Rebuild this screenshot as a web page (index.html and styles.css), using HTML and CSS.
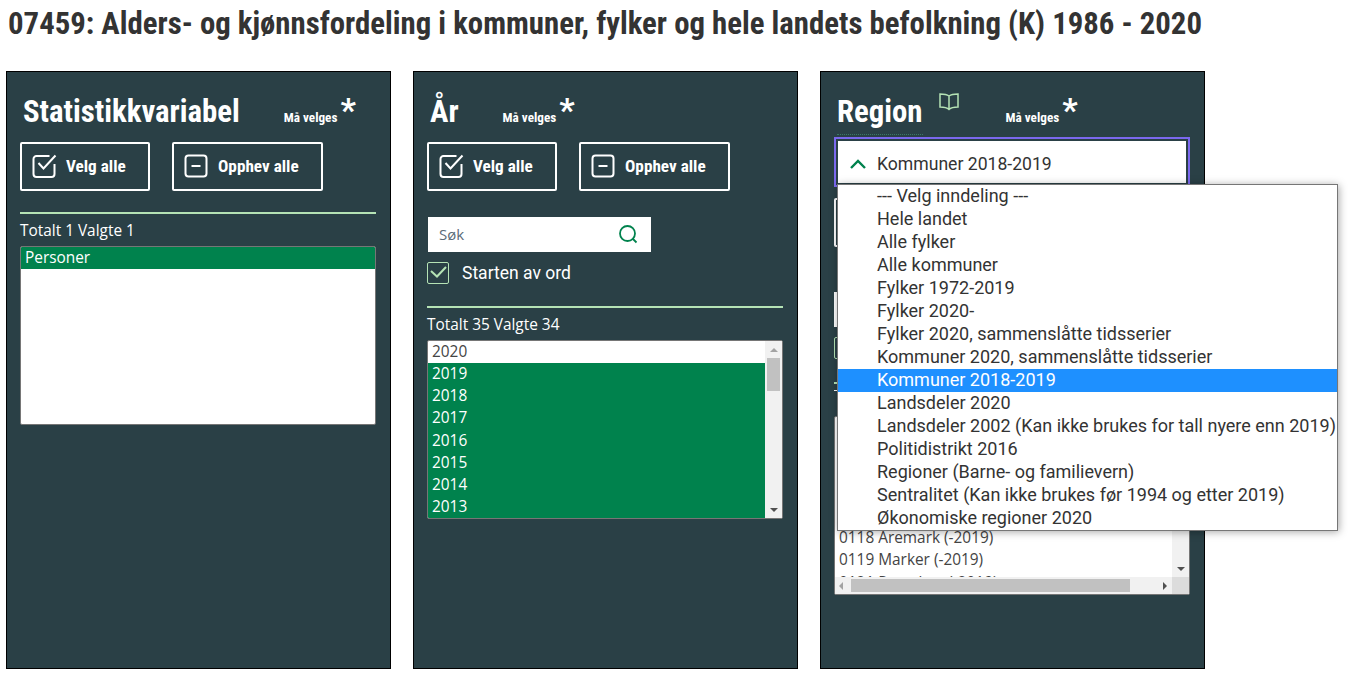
FILE: index.html
```html
<!DOCTYPE html>
<html lang="en">
<head>
    <meta charset="UTF-8">
    <title>07459</title>
    <link rel="stylesheet" href="styles.css">
</head>
<body>
    <h1 class="title">07459: Alders- og kjønnsfordeling i kommuner, fylker og hele landets befolkning (K) 1986 - 2020</h1>

    <div class="panels">
        <section class="panel">
            <div class="panel-head">
                <h2 class="panel-title">Statistikkvariabel</h2>
                <span class="required">Må velges</span><span class="star">*</span>
            </div>
            <div class="actions">
                <button class="action action-all">
                    <svg class="action-icon" viewBox="0 0 24 24"><path d="M22.500 10v10a3 3 0 0 1-3 3h-15a3 3 0 0 1-3-3V5a3 3 0 0 1 3-3h13"/><path d="M6.500 9l5 5.500L23.500 1.500"/></svg>
                    Velg alle
                </button>
                <button class="action action-none">
                    <svg class="action-icon" viewBox="0 0 24 24"><rect x="1.500" y="1.500" width="21" height="21" rx="3"/><path d="M7.500 12h9"/></svg>
                    Opphev alle
                </button>
            </div>
            <hr class="rule">
            <div class="count">Totalt 1 Valgte 1</div>
            <div class="list">
                <div class="opt sel">Personer</div>
            </div>
        </section>

        <section class="panel">
            <div class="panel-head">
                <h2 class="panel-title">År</h2>
                <span class="required">Må velges</span><span class="star">*</span>
            </div>
            <div class="actions">
                <button class="action action-all">
                    <svg class="action-icon" viewBox="0 0 24 24"><path d="M22.500 10v10a3 3 0 0 1-3 3h-15a3 3 0 0 1-3-3V5a3 3 0 0 1 3-3h13"/><path d="M6.500 9l5 5.500L23.500 1.500"/></svg>
                    Velg alle
                </button>
                <button class="action action-none">
                    <svg class="action-icon" viewBox="0 0 24 24"><rect x="1.500" y="1.500" width="21" height="21" rx="3"/><path d="M7.500 12h9"/></svg>
                    Opphev alle
                </button>
            </div>
            <div class="search">
                <span>Søk</span>
                <svg class="search-icon" viewBox="0 0 20 20"><circle cx="9.500" cy="9.500" r="7.500"/><path d="M15 15l3.500 3.500"/></svg>
            </div>
            <div class="check-row">
                <span class="check-box"><svg viewBox="0 0 20 20"><path d="M3 8l6 5.500L18 4"/></svg></span>
                Starten av ord
            </div>
            <hr class="rule rule-search">
            <div class="count">Totalt 35 Valgte 34</div>
            <div class="list list-year">
                <div class="list-items">
                    <div class="opt">2020</div>
                    <div class="opt sel">2019</div>
                    <div class="opt sel">2018</div>
                    <div class="opt sel">2017</div>
                    <div class="opt sel">2016</div>
                    <div class="opt sel">2015</div>
                    <div class="opt sel">2014</div>
                    <div class="opt sel">2013</div>
                </div>
                <div class="vbar">
                    <span class="arrow arrow-up"></span>
                    <span class="vthumb"></span>
                    <span class="arrow arrow-down"></span>
                </div>
            </div>
        </section>

        <section class="panel">
            <div class="panel-head">
                <h2 class="panel-title region-title">Region</h2>
                <svg class="book" viewBox="0 0 20 18"><path d="M10 3C8 1.500 4.500 1 1 1v13c3.500 0 7 .5 9 2.500 2-2 5.500-2.500 9-2.500V1c-3.500 0-7 .5-9 2zM10 3v14"/></svg>
                <span class="required required-region">Må velges</span><span class="star">*</span>
            </div>
            <div class="select">
                <svg class="chevron" viewBox="0 0 16 10"><path d="M1 9l7-7 7 7"/></svg>
                Kommuner 2018-2019
            </div>
            <!-- these sit behind the open menu, only their left edges show -->
            <div class="actions actions-region">
                <button class="action action-all"></button>
            </div>
            <div class="search search-region"></div>
            <div class="check-row">
                <span class="check-box"></span>
            </div>
            <hr class="rule rule-region">
            <div class="count count-region"></div>
            <div class="list list-region">
                <div class="list-main">
                    <div class="list-items list-scrolled">
                        <div class="opt"></div>
                        <div class="opt"></div>
                        <div class="opt"></div>
                        <div class="opt"></div>
                        <div class="opt"></div>
                        <div class="opt">0118 Aremark (-2019)</div>
                        <div class="opt">0119 Marker (-2019)</div>
                        <div class="opt opt-clipped">0121 Rømskog (-2019)</div>
                    </div>
                    <div class="vbar">
                        <span class="arrow arrow-up"></span>
                        <span class="vthumb"></span>
                        <span class="arrow arrow-down"></span>
                    </div>
                </div>
                <div class="hbar">
                    <span class="arrow arrow-left"></span>
                    <span class="hthumb"></span>
                    <span class="arrow arrow-right"></span>
                    <span class="corner"></span>
                </div>
            </div>

            <ul class="menu">
                <li>--- Velg inndeling ---</li>
                <li>Hele landet</li>
                <li>Alle fylker</li>
                <li>Alle kommuner</li>
                <li>Fylker 1972-2019</li>
                <li>Fylker 2020-</li>
                <li>Fylker 2020, sammenslåtte tidsserier</li>
                <li>Kommuner 2020, sammenslåtte tidsserier</li>
                <li class="active">Kommuner 2018-2019</li>
                <li>Landsdeler 2020</li>
                <li>Landsdeler 2002 (Kan ikke brukes for tall nyere enn 2019)</li>
                <li>Politidistrikt 2016</li>
                <li>Regioner (Barne- og familievern)</li>
                <li>Sentralitet (Kan ikke brukes før 1994 og etter 2019)</li>
                <li>Økonomiske regioner 2020</li>
            </ul>
        </section>
    </div>
</body>
</html>
```

FILE: styles.css
```css
* {
    box-sizing: border-box;
}
body {
    margin: 0;
    height: 674px;
    overflow: hidden;
    background-color: #fff;
    font-family: Roboto, "Liberation Sans", sans-serif;
    color: #222;
}
.title {
    margin: 0;
    padding: 8px 0 0 8px;
    height: 71px;
    font-size: 30.8px;
    line-height: 32px;
    font-weight: 700;
    font-stretch: condensed;
    white-space: nowrap;
    color: #333;
}
.panels {
    display: flex;
    gap: 22px;
    padding-left: 6px;
}
.panel {
    position: relative;
    width: 385px;
    height: 598px;
    padding: 0 13px;
    background-color: #2a4046;
    border: 1px solid #000;
    color: #fff;
}
.panel-head {
    display: flex;
    align-items: flex-start;
    height: 70px;
}
.panel-title {
    margin: 23px 44px 0 3px;
    font-size: 30.8px;
    line-height: 34px;
    font-weight: 700;
    font-stretch: condensed;
}
.required {
    margin-top: 38px;
    font-size: 13.2px;
    line-height: 16px;
    font-weight: 700;
    font-stretch: condensed;
}
.star {
    margin: 21px 0 0 3px;
    font-size: 34px;
    line-height: 34px;
    font-weight: 700;
}
.actions {
    display: flex;
    gap: 22px;
}
.action {
    display: flex;
    align-items: center;
    height: 49px;
    padding: 0 0 2px 10px;
    background: none;
    border: 2px solid #fff;
    border-radius: 2px;
    color: #fff;
    font-family: inherit;
    font-size: 17.2px;
    font-weight: 700;
    font-stretch: condensed;
}
.action-all {
    width: 130px;
}
.action-none {
    width: 151px;
}
.action-icon {
    width: 24px;
    height: 24px;
    margin-right: 10px;
    fill: none;
    stroke: #fff;
    stroke-width: 2;
    overflow: visible;
}
.rule {
    width: 356px;
    height: 2px;
    margin: 21px 0 6px;
    background-color: #b5e3b5;
    border: none;
}
.rule-search {
    margin-top: 22px;
}
.count {
    height: 21px;
    margin-bottom: 5px;
    font-family: "Open Sans", sans-serif;
    font-size: 15.4px;
    line-height: 21px;
}
.list {
    width: 356px;
    height: 179px;
    background-color: #fff;
    border: 1px solid #767676;
    border-radius: 2px;
    overflow: hidden;
    font-family: "Open Sans", sans-serif;
    font-size: 15.4px;
    color: #444;
}
.list-year {
    display: flex;
}
.list-items {
    flex: 1;
    min-width: 0;
}
.opt {
    height: 22.15px;
    padding-left: 4px;
    line-height: 22px;
    white-space: nowrap;
}
.opt-clipped {
    margin-top: 1px;
}
.sel {
    background-color: #00824d;
    color: #fff;
}
.vbar {
    display: flex;
    flex-direction: column;
    align-items: center;
    flex: none;
    width: 17px;
    background-color: #f1f1f1;
}
.vthumb {
    width: 13px;
    height: 33px;
    margin-top: 6px;
    background-color: #c1c1c1;
}
.arrow {
    width: 0;
    height: 0;
    border: 4px solid transparent;
}
.arrow-up {
    margin-top: 7px;
    border-top: none;
    border-bottom: 4px solid #a3a3a3;
}
.arrow-down {
    margin-top: auto;
    margin-bottom: 6px;
    border-bottom: none;
    border-top: 4px solid #505050;
}
.arrow-left {
    margin-left: 4px;
    border-left: none;
    border-right: 4px solid #a3a3a3;
}
.arrow-right {
    margin-left: auto;
    margin-right: 5px;
    border-right: none;
    border-left: 4px solid #505050;
}
.search {
    display: flex;
    align-items: center;
    justify-content: space-between;
    width: 223px;
    height: 35px;
    margin: 26px 0 0 1px;
    padding: 0 13px 2px 11px;
    background-color: #fff;
    font-family: "Open Sans", sans-serif;
    font-size: 15px;
    color: #5a6b78;
}
.search-icon {
    width: 20px;
    height: 20px;
    fill: none;
    stroke: #00824d;
    stroke-width: 1.8;
}
.check-row {
    display: flex;
    align-items: center;
    gap: 13px;
    height: 22px;
    margin-top: 10px;
    font-size: 17.5px;
}
.check-box {
    width: 22px;
    height: 22px;
    border: 1px solid #b5e3b5;
    border-radius: 2px;
}
.check-box svg {
    display: block;
    fill: none;
    stroke: #b5e3b5;
    stroke-width: 2;
}
.region-title {
    height: 40px;
    margin-right: 16px;
    border-bottom: 1px dotted #3a7a66;
}
.book {
    flex: none;
    width: 20px;
    height: 18px;
    margin-top: 21px;
    fill: none;
    stroke: #b5e3b5;
    stroke-width: 1.500;
}
.required-region {
    margin-left: 47px;
}
.select {
    display: flex;
    align-items: center;
    width: 352px;
    height: 46px;
    margin: -3px 0 0 2px;
    padding: 3px 0 0 12px;
    background-color: #fff;
    border: 2px solid #2a4046;
    outline: 2px solid #7b68ee;
    font-size: 17.6px;
    color: #333;
}
.chevron {
    flex: none;
    width: 16px;
    height: 10px;
    margin-right: 11px;
    fill: none;
    stroke: #00824d;
    stroke-width: 2.4;
}
.actions-region {
    margin-top: 13px;
}
.search-region {
    margin: 45px 0 0;
}
.rule-region {
    margin-top: 23px;
}
.count-region::before {
    content: "";
    display: block;
    width: 4px;
    height: 1px;
    margin-top: 4px;
    background-color: #fff;
}
.list-region {
    display: flex;
    flex-direction: column;
}
.list-main {
    display: flex;
    flex: 1;
    min-height: 0;
}
.list-scrolled {
    margin-top: -1px;
}
.hbar {
    display: flex;
    align-items: center;
    flex: none;
    height: 17px;
    background-color: #f1f1f1;
}
.hthumb {
    width: 279px;
    height: 13px;
    margin-left: 8px;
    background-color: #c1c1c1;
}
.corner {
    width: 17px;
    height: 17px;
    background-color: #dcdcdc;
}
.menu {
    position: absolute;
    left: 16px;
    top: 112px;
    width: 501px;
    margin: 0;
    padding: 0;
    list-style: none;
    background-color: #fff;
    border: 1px solid #767676;
    box-shadow: 1px 1px 8px rgba(0, 0, 0, 0.35);
    font-size: 18px;
    color: #333;
    z-index: 2;
}
.menu li {
    height: 23px;
    padding-left: 39px;
    line-height: 22px;
    white-space: nowrap;
}
.menu .active {
    background-color: #1e90ff;
    color: #fff;
}
```
